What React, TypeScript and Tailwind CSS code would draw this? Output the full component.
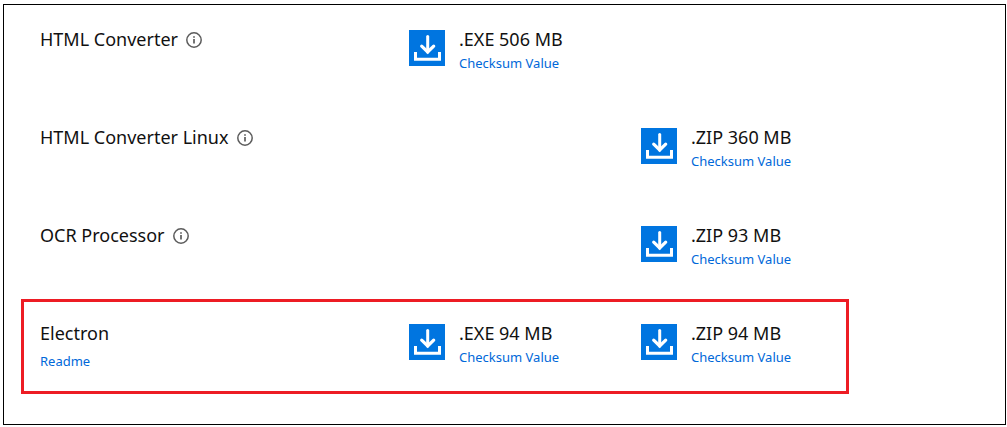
type Download = { file: string };

type Product = {
  name: string;
  info?: boolean;
  readme?: boolean;
  highlighted?: boolean;
  windows?: Download;
  linux?: Download;
};

const products: Product[] = [
  { name: "HTML Converter", info: true, windows: { file: ".EXE 506 MB" } },
  { name: "HTML Converter Linux", info: true, linux: { file: ".ZIP 360 MB" } },
  { name: "OCR Processor", info: true, linux: { file: ".ZIP 93 MB" } },
  {
    name: "Electron",
    readme: true,
    highlighted: true,
    windows: { file: ".EXE 94 MB" },
    linux: { file: ".ZIP 94 MB" },
  },
];

function InfoIcon() {
  return (
    <svg viewBox="0 0 16 16" className="size-4" fill="none" aria-hidden="true">
      <circle cx="8" cy="8" r="7.2" stroke="#5c5c5c" strokeWidth="1.5" />
      <path d="M8 7v4.6" stroke="#5c5c5c" strokeWidth="1.7" />
      <path d="M8 4.2v1.6" stroke="#5c5c5c" strokeWidth="1.7" />
    </svg>
  );
}

function DownloadIcon() {
  return (
    <svg viewBox="0 0 36 36" className="size-9" fill="none" aria-hidden="true">
      <rect width="36" height="36" fill="#0075e0" />
      <path d="M18.7 6.5v15.5" stroke="#fff" strokeWidth="3" strokeLinecap="round" />
      <path
        d="M12.7 16.2l6 5.8 6-5.8"
        stroke="#fff"
        strokeWidth="3.2"
        strokeLinecap="round"
        strokeLinejoin="miter"
      />
      <path d="M6.5 22v7.3h24V22" stroke="#fff" strokeWidth="3" />
    </svg>
  );
}

function DownloadCell({ product, download }: { product: string; download?: Download }) {
  return (
    <td className="pt-[25px] align-top">
      {download && (
        <div className="flex gap-3.5">
          <a href="#download" aria-label={`Download ${product} ${download.file}`} className="shrink-0">
            <DownloadIcon />
          </a>
          <div className="-mt-[3px] whitespace-nowrap">
            <div className="text-[18px] leading-6">{download.file}</div>
            <a href="#checksum" className="block text-[13px] leading-6 text-[#0068d9]">
              Checksum Value
            </a>
          </div>
        </div>
      )}
    </td>
  );
}

export default function App() {
  return (
    <div className="bg-white pt-1 pr-px pb-0.5 pl-[3px] font-['Noto_Sans',sans-serif] text-[#111]">
      <main className="border border-black pb-[30px] pl-[17px]">
        <table className="w-full max-w-[828px] table-fixed border-collapse text-left">
          <colgroup>
            <col />
            <col className="w-[232px]" />
            <col className="w-[208px]" />
          </colgroup>
          <tbody>
            {products.map((p) => (
              <tr
                key={p.name}
                className={
                  p.highlighted
                    ? "h-[95px] outline-3 -outline-offset-3 outline-[#ed1c24]"
                    : "h-[98px]"
                }
              >
                <th scope="row" className="pt-[22px] pl-[19px] align-top font-normal">
                  <div className="flex items-center gap-2 text-[18px] leading-6">
                    {p.name}
                    {p.info && (
                      <button type="button" aria-label={`About ${p.name}`} className="mt-0.5">
                        <InfoIcon />
                      </button>
                    )}
                  </div>
                  {p.readme && (
                    <a href="#readme" className="mt-1 inline-block text-[13px] leading-6 text-[#0068d9]">
                      Readme
                    </a>
                  )}
                </th>
                <DownloadCell product={p.name} download={p.windows} />
                <DownloadCell product={p.name} download={p.linux} />
              </tr>
            ))}
          </tbody>
        </table>
      </main>
    </div>
  );
}
